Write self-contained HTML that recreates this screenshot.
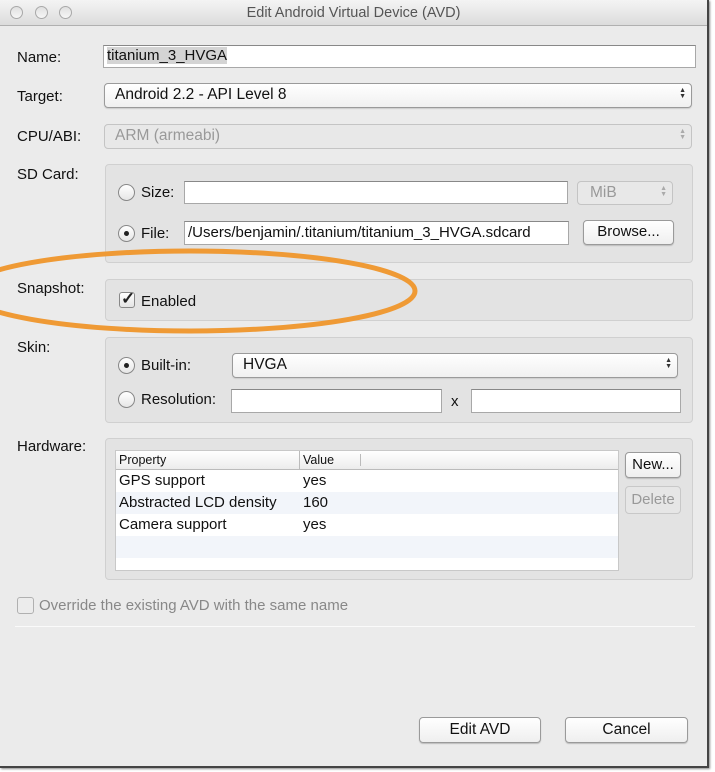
<!DOCTYPE html>
<html><head><meta charset="utf-8"><style>
*{box-sizing:border-box;margin:0;padding:0}
body{width:715px;height:772px;background:#fff;position:relative;overflow:hidden;font-family:"Liberation Sans",sans-serif;font-size:15px;color:#111}
.win{position:absolute;left:0;top:0;width:709px;height:768px;background:#ebebeb;border-right:2px solid #444;border-bottom:2px solid #444;box-shadow:1px 1px 2px #888}
.title{position:absolute;left:0;top:0;width:707px;height:26px;background:linear-gradient(#f4f4f4,#dcdcdc);border-bottom:1px solid #b0b0b0;text-align:center;line-height:26px;color:#555;font-size:14.5px}
.dot{position:absolute;top:6px;width:13px;height:13px;border-radius:50%;border:1px solid #a8a8a8;background:linear-gradient(#e0e0e0,#f6f6f6)}
.a{position:absolute}
.lbl{position:absolute;font-size:15px;color:#111}
.inp{position:absolute;background:#fff;border:1px solid #a8a8a8;border-top-color:#888;font-size:15px;line-height:20px;padding-left:3px}
.dd{position:absolute;background:linear-gradient(#fff,#f0f0f0);border:1px solid #9a9a9a;border-radius:4px;font-size:15.5px;line-height:22px;padding-left:10px;box-shadow:0 1px 1px #ccc}
.arr{position:absolute;right:5px;top:4px;font-size:7px;line-height:6px;color:#333}
.grp{position:absolute;border:1px solid #d0d0d0;border-radius:4px;background:#e3e3e3}
.btn{position:absolute;background:linear-gradient(#fff,#efefef);border:1px solid #9a9a9a;border-radius:4px;text-align:center;font-size:15px;box-shadow:0 1px 1px #bbb}
.rad{position:absolute;width:17px;height:17px;border-radius:50%;border:1px solid #888;background:linear-gradient(#fff,#e6e6e6)}
.rad.on:after{content:"";position:absolute;left:5px;top:5px;width:5px;height:5px;border-radius:50%;background:#222}
.row{height:22px;line-height:22px;padding-left:3px;position:relative;font-size:15px}
</style></head><body>
<div class="win">
<div class="title">Edit Android Virtual Device (AVD)</div>
<div class="dot" style="left:10px"></div><div class="dot" style="left:35px"></div><div class="dot" style="left:59px"></div>

<div class="lbl" style="left:17px;top:49px">Name:</div>
<div class="inp" style="left:103px;top:45px;width:593px;height:23px"><span style="background:#d4d4d4">titanium_3_HVGA</span></div>

<div class="lbl" style="left:17px;top:88px">Target:</div>
<div class="dd" style="left:104px;top:83px;width:588px;height:25px">Android 2.2 - API Level 8<div class="arr">▲<br>▼</div></div>

<div class="lbl" style="left:17px;top:128px">CPU/ABI:</div>
<div class="dd" style="left:104px;top:124px;width:588px;height:25px;color:#999;border-color:#c4c4c4;background:#e8e8e8;box-shadow:none">ARM (armeabi)<div class="arr" style="color:#aaa">▲<br>▼</div></div>

<div class="lbl" style="left:17px;top:166px">SD Card:</div>
<div class="grp" style="left:105px;top:164px;width:588px;height:99px"></div>
<div class="rad" style="left:118px;top:184px"></div>
<div class="lbl" style="left:141px;top:184px">Size:</div>
<div class="inp" style="left:184px;top:181px;width:384px;height:23px"></div>
<div class="dd" style="left:577px;top:181px;width:96px;height:24px;color:#999;border-color:#c4c4c4;background:#e8e8e8;box-shadow:none;padding-left:12px">MiB<div class="arr" style="color:#aaa">▲<br>▼</div></div>
<div class="rad on" style="left:118px;top:225px"></div>
<div class="lbl" style="left:141px;top:225px">File:</div>
<div class="inp" style="left:184px;top:221px;width:385px;height:24px;line-height:22px;white-space:nowrap;overflow:hidden">/Users/benjamin/.titanium/titanium_3_HVGA.sdcard</div>
<div class="btn" style="left:583px;top:220px;width:91px;height:25px;line-height:22px">Browse...</div>

<div class="lbl" style="left:17px;top:280px">Snapshot:</div>
<div class="grp" style="left:105px;top:279px;width:588px;height:42px"></div>
<div class="a" style="left:119px;top:292px;width:16px;height:16px;border:1px solid #888;border-radius:3px;background:linear-gradient(#fff,#e4e4e4)"><span style="position:absolute;left:1px;top:-4px;font-size:17px;font-weight:bold;color:#222">✓</span></div>
<div class="lbl" style="left:141px;top:293px">Enabled</div>

<div class="lbl" style="left:17px;top:339px">Skin:</div>
<div class="grp" style="left:105px;top:337px;width:588px;height:86px"></div>
<div class="rad on" style="left:118px;top:357px"></div>
<div class="lbl" style="left:141px;top:357px">Built-in:</div>
<div class="dd" style="left:232px;top:353px;width:446px;height:25px">HVGA<div class="arr">▲<br>▼</div></div>
<div class="rad" style="left:118px;top:391px"></div>
<div class="lbl" style="left:141px;top:391px">Resolution:</div>
<div class="inp" style="left:231px;top:389px;width:211px;height:24px"></div>
<div class="lbl" style="left:451px;top:393px">x</div>
<div class="inp" style="left:471px;top:389px;width:210px;height:24px"></div>

<div class="lbl" style="left:17px;top:438px">Hardware:</div>
<div class="grp" style="left:105px;top:438px;width:588px;height:142px"></div>
<div class="a" style="left:115px;top:450px;width:504px;height:121px;background:#fff;border:1px solid #c8c8c8">
 <div style="height:19px;border-bottom:1px solid #bbb;background:linear-gradient(#fff,#ececec);font-size:12.5px;line-height:18px;position:relative">
  <span style="position:absolute;left:3px">Property</span>
  <span style="position:absolute;left:183px;border-left:1px solid #bbb;padding-left:3px">Value</span>
  <span style="position:absolute;left:244px;top:3px;height:12px;border-left:1px solid #bbb"></span>
 </div>
 <div class="row">GPS support<span style="position:absolute;left:187px">yes</span></div>
 <div class="row" style="background:#f2f5fa">Abstracted LCD density<span style="position:absolute;left:187px">160</span></div>
 <div class="row">Camera support<span style="position:absolute;left:187px">yes</span></div>
 <div class="row" style="background:#f2f5fa"></div>
</div>
<div class="btn" style="left:625px;top:452px;width:56px;height:26px;line-height:24px">New...</div>
<div class="btn" style="left:625px;top:486px;width:56px;height:28px;line-height:26px;color:#999;border-color:#c8c8c8;background:#e6e6e6;box-shadow:none">Delete</div>

<div class="a" style="left:17px;top:597px;width:17px;height:17px;border:1px solid #b0b0b0;border-radius:3px;background:#ececec"></div>
<div class="lbl" style="left:39px;top:597px;color:#888">Override the existing AVD with the same name</div>
<div class="a" style="left:15px;top:626px;width:680px;height:1px;background:#aaa;border-bottom:1px solid #fafafa"></div>

<div class="btn" style="left:419px;top:717px;width:122px;height:26px;line-height:24px;font-size:15.5px">Edit AVD</div>
<div class="btn" style="left:565px;top:717px;width:123px;height:26px;line-height:24px;font-size:15.5px">Cancel</div>
</div>
<svg class="a" style="left:0;top:0" width="715" height="772"><ellipse cx="190" cy="291" rx="225" ry="40" fill="none" stroke="#ef9a35" stroke-width="5"/></svg>
</body></html>
